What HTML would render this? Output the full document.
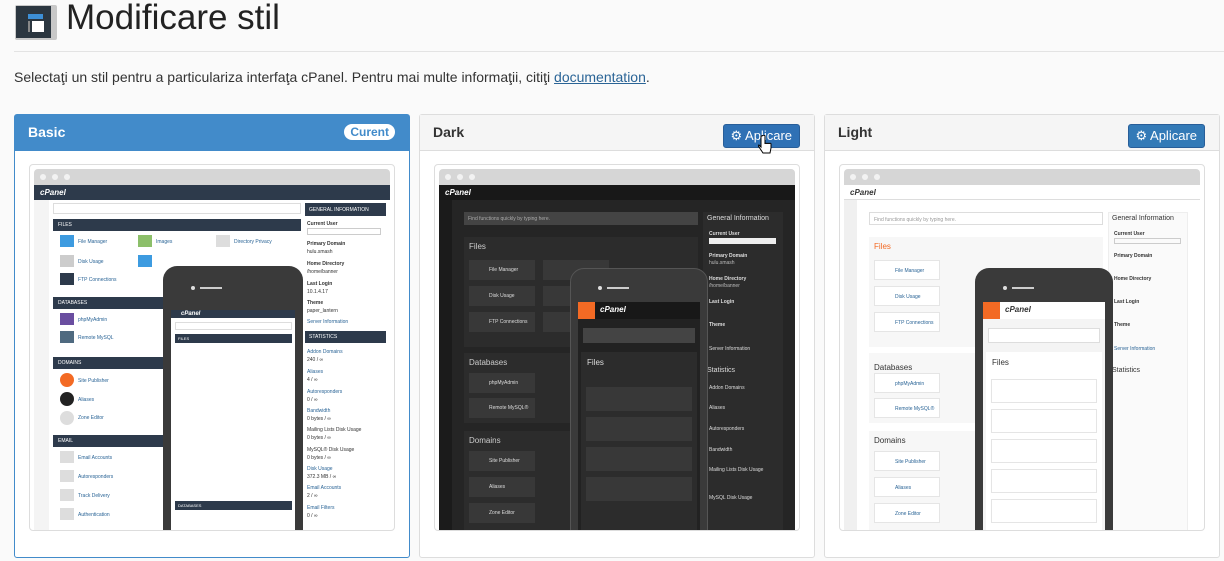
<!DOCTYPE html>
<html><head><meta charset="utf-8"><style>
*{box-sizing:border-box;margin:0;padding:0}
body{width:1224px;height:561px;overflow:hidden;background:#fafafa;font-family:"Liberation Sans",sans-serif;color:#333;position:relative}
.a{position:absolute}
h1{position:absolute;left:66px;top:-2px;font-size:35px;font-weight:400;color:#222}
.hr{position:absolute;left:14px;right:0;top:51px;height:1px;background:#e3e3e3}
p.lead{position:absolute;left:14px;top:69px;font-size:14px;color:#333}
p.lead a{color:#2a6496;text-decoration:underline}
.card{position:absolute;top:114px;width:396px;height:444px;border:1px solid #ddd;border-radius:3px;background:#fff}
.card .hd{height:36px;background:#f5f5f5;border-bottom:1px solid #ddd;padding:9px 13px;font-size:14px;font-weight:bold;color:#333}
.card.sel{border-color:#428bca}
.card.sel .hd{background:#428bca;color:#fff;border-color:#428bca}
.badge{position:absolute;right:14px;top:9px;background:#fff;color:#428bca;border-radius:9px;font-size:12px;font-weight:bold;padding:1px 6px}
.btn{position:absolute;right:14px;top:9px;background:#2f71b5;color:#fff;border-radius:3px;font-size:13px;padding:3px 7px 3px 6px;border:1px solid #285e99}
.frame{position:absolute;left:14px;top:49px;width:366px;height:367px;border:1px solid #ddd;border-radius:4px;background:#fff;overflow:hidden}
.tb{position:absolute;left:4px;right:4px;top:4px;height:16px;background:#d6d6d6;border-radius:4px 4px 0 0}
.tb i{position:absolute;top:5px;width:6px;height:6px;border-radius:3px;background:#f2f2f2}
.r{position:absolute}
.t{position:absolute;font-size:5px;white-space:nowrap}
</style></head><body>
<div class="a" style="left:15px;top:5px;width:42px;height:35px;background:#c8c8c8;border-radius:2px"></div>
<div class="a" style="left:16px;top:6px;width:35px;height:32px;background:#2b3640"></div>
<div class="a" style="left:28px;top:14px;width:15px;height:5px;background:#3d8fd6"></div>
<div class="a" style="left:32px;top:21px;width:12px;height:11px;background:#fff"></div>
<div class="a" style="left:28px;top:21px;width:2px;height:11px;border:1px solid #888"></div>
<h1>Modificare stil</h1>
<div class="hr"></div>
<p class="lead">Selectaţi un stil pentru a particulariza interfaţa cPanel. Pentru mai multe informaţii, citiţi <a>documentation</a>.</p>

<!-- Card 1 -->
<div class="card sel" style="left:14px"><div class="hd">Basic</div><span class="badge">Curent</span>
<div class="frame">
 <div class="tb"><i style="left:6px"></i><i style="left:18px"></i><i style="left:30px"></i></div>
 <div class="r" style="left:4px;right:4px;top:20px;height:15px;background:#2d3a4b"><span class="t" style="left:6px;top:3px;color:#fff;font-size:8px;font-style:italic;font-weight:bold">cPanel</span></div>
 <div class="r" style="left:4px;top:35px;width:15px;height:330px;background:#f4f4f4"></div>
 <div class="r" style="left:23px;top:38px;width:248px;height:11px;border:1px solid #ddd"></div>
 <div class="r" style="left:23px;top:54px;width:248px;height:12px;background:#2d3a4b"><span class="t" style="left:5px;top:3px;color:#fff">FILES</span></div>
 <div class="r" style="left:23px;top:132px;width:248px;height:12px;background:#2d3a4b"><span class="t" style="left:5px;top:3px;color:#fff">DATABASES</span></div>
 <div class="r" style="left:23px;top:192px;width:248px;height:12px;background:#2d3a4b"><span class="t" style="left:5px;top:3px;color:#fff">DOMAINS</span></div>
 <div class="r" style="left:23px;top:270px;width:248px;height:12px;background:#2d3a4b"><span class="t" style="left:5px;top:3px;color:#fff">EMAIL</span></div>
 <div class="r" style="left:30px;top:70px;width:14px;height:12px;background:#3d9be0"></div><span class="t" style="left:48px;top:74px;color:#2a6496">File Manager</span>
 <div class="r" style="left:30px;top:90px;width:14px;height:12px;background:#ccc"></div><span class="t" style="left:48px;top:94px;color:#2a6496">Disk Usage</span>
 <div class="r" style="left:30px;top:108px;width:14px;height:12px;background:#2d3a4b"></div><span class="t" style="left:48px;top:112px;color:#2a6496">FTP Connections</span>
 <div class="r" style="left:30px;top:148px;width:14px;height:12px;background:#6a4ea0"></div><span class="t" style="left:48px;top:152px;color:#2a6496">phpMyAdmin</span>
 <div class="r" style="left:30px;top:166px;width:14px;height:12px;background:#4f6a80"></div><span class="t" style="left:48px;top:170px;color:#2a6496">Remote MySQL</span>
 <div class="r" style="left:30px;top:208px;width:14px;height:14px;border-radius:7px;background:#f36a24"></div><span class="t" style="left:48px;top:213px;color:#2a6496">Site Publisher</span>
 <div class="r" style="left:30px;top:227px;width:14px;height:14px;border-radius:7px;background:#222"></div><span class="t" style="left:48px;top:232px;color:#2a6496">Aliases</span>
 <div class="r" style="left:30px;top:246px;width:14px;height:14px;border-radius:7px;background:#ddd"></div><span class="t" style="left:48px;top:250px;color:#2a6496">Zone Editor</span>
 <div class="r" style="left:30px;top:286px;width:14px;height:12px;background:#ddd"></div><span class="t" style="left:48px;top:290px;color:#2a6496">Email Accounts</span>
 <div class="r" style="left:30px;top:305px;width:14px;height:12px;background:#ddd"></div><span class="t" style="left:48px;top:309px;color:#2a6496">Autoresponders</span>
 <div class="r" style="left:30px;top:324px;width:14px;height:12px;background:#ddd"></div><span class="t" style="left:48px;top:328px;color:#2a6496">Track Delivery</span>
 <div class="r" style="left:30px;top:343px;width:14px;height:12px;background:#ddd"></div><span class="t" style="left:48px;top:347px;color:#2a6496">Authentication</span>
 <div class="r" style="left:108px;top:70px;width:14px;height:12px;background:#8cbf6a"></div><span class="t" style="left:126px;top:74px;color:#2a6496">Images</span>
 <div class="r" style="left:108px;top:90px;width:14px;height:12px;background:#3d9be0"></div>
 <div class="r" style="left:186px;top:70px;width:14px;height:12px;background:#ddd"></div><span class="t" style="left:204px;top:74px;color:#2a6496">Directory Privacy</span>
 <div class="r" style="left:275px;top:38px;width:81px;height:13px;background:#2d3a4b"><span class="t" style="left:4px;top:4px;color:#fff">GENERAL INFORMATION</span></div>
 <span class="t" style="left:277px;top:56px;font-weight:bold">Current User</span>
 <div class="r" style="left:277px;top:63px;width:74px;height:7px;border:1px solid #ccc"></div>
 <span class="t" style="left:277px;top:76px;font-weight:bold">Primary Domain</span><span class="t" style="left:277px;top:84px">hulu.smash</span>
 <span class="t" style="left:277px;top:96px;font-weight:bold">Home Directory</span><span class="t" style="left:277px;top:104px">/home/banner</span>
 <span class="t" style="left:277px;top:116px;font-weight:bold">Last Login</span><span class="t" style="left:277px;top:124px">10.1.4.17</span>
 <span class="t" style="left:277px;top:135px;font-weight:bold">Theme</span><span class="t" style="left:277px;top:143px">paper_lantern</span>
 <span class="t" style="left:277px;top:154px;color:#2a6496">Server Information</span>
 <div class="r" style="left:275px;top:166px;width:81px;height:12px;background:#2d3a4b"><span class="t" style="left:4px;top:3px;color:#fff">STATISTICS</span></div>
 <span class="t" style="left:277px;top:184px;color:#2a6496">Addon Domains</span><span class="t" style="left:277px;top:192px">240 / ∞</span>
 <span class="t" style="left:277px;top:204px;color:#2a6496">Aliases</span><span class="t" style="left:277px;top:212px">4 / ∞</span>
 <span class="t" style="left:277px;top:224px;color:#2a6496">Autoresponders</span><span class="t" style="left:277px;top:232px">0 / ∞</span>
 <span class="t" style="left:277px;top:243px;color:#2a6496">Bandwidth</span><span class="t" style="left:277px;top:251px">0 bytes / ∞</span>
 <span class="t" style="left:277px;top:262px">Mailing Lists Disk Usage</span><span class="t" style="left:277px;top:270px">0 bytes / ∞</span>
 <span class="t" style="left:277px;top:282px">MySQL® Disk Usage</span><span class="t" style="left:277px;top:290px">0 bytes / ∞</span>
 <span class="t" style="left:277px;top:301px;color:#2a6496">Disk Usage</span><span class="t" style="left:277px;top:309px">372.3 MB / ∞</span>
 <span class="t" style="left:277px;top:320px;color:#2a6496">Email Accounts</span><span class="t" style="left:277px;top:328px">2 / ∞</span>
 <span class="t" style="left:277px;top:340px;color:#2a6496">Email Filters</span><span class="t" style="left:277px;top:348px">0 / ∞</span>
 <div class="r" style="left:133px;top:101px;width:140px;height:280px;background:#3a3a3a;border-radius:14px"></div>
 <div class="r" style="left:161px;top:121px;width:4px;height:4px;border-radius:2px;background:#ddd"></div>
 <div class="r" style="left:170px;top:122px;width:22px;height:2px;background:#ccc"></div>
 <div class="r" style="left:141px;top:145px;width:124px;height:230px;background:#fff"></div>
 <div class="r" style="left:141px;top:145px;width:124px;height:8px;background:#2d3a4b"><span class="t" style="left:10px;top:1px;color:#fff;font-size:6px;font-style:italic;font-weight:bold">cPanel</span></div>
 <div class="r" style="left:145px;top:157px;width:117px;height:8px;border:1px solid #ddd"></div>
 <div class="r" style="left:145px;top:169px;width:117px;height:9px;background:#2d3a4b"><span class="t" style="left:3px;top:2px;color:#fff;font-size:4px">FILES</span></div>
 <div class="r" style="left:145px;top:336px;width:117px;height:9px;background:#2d3a4b"><span class="t" style="left:3px;top:2px;color:#fff;font-size:4px">DATABASES</span></div>
</div></div>

<!-- Card 2 -->
<div class="card" style="left:419px"><div class="hd">Dark</div>
<span class="btn">⚙ Aplicare</span>
<div class="frame" style="border-color:#ddd">
 <div class="tb" style="left:4px;right:4px"><i style="left:6px"></i><i style="left:18px"></i><i style="left:30px"></i></div>
 <div class="r" style="left:4px;right:4px;top:20px;height:347px;background:#252525"></div>
 <div class="r" style="left:4px;right:4px;top:20px;height:15px;background:#181818"><span class="t" style="left:6px;top:3px;color:#fff;font-size:8px;font-style:italic;font-weight:bold">cPanel</span></div>
 <div class="r" style="left:4px;top:35px;width:13px;height:330px;background:#1b1b1b"></div>
 <div class="r" style="left:29px;top:47px;width:234px;height:13px;background:#444"><span class="t" style="left:4px;top:4px;color:#aaa">Find functions quickly by typing here.</span></div>
 <div class="r" style="left:29px;top:72px;width:234px;height:110px;background:#2c2c2c"><span class="t" style="left:5px;top:5px;color:#ccc;font-size:8px">Files</span></div>
 <div class="r" style="left:29px;top:188px;width:234px;height:70px;background:#2c2c2c"><span class="t" style="left:5px;top:5px;color:#ccc;font-size:8px">Databases</span></div>
 <div class="r" style="left:29px;top:266px;width:234px;height:100px;background:#2c2c2c"><span class="t" style="left:5px;top:5px;color:#ccc;font-size:8px">Domains</span></div>
 <div class="r" style="left:34px;top:95px;width:66px;height:20px;background:#383838"><span class="t" style="left:20px;top:7px;color:#ddd">File Manager</span></div>
 <div class="r" style="left:34px;top:121px;width:66px;height:20px;background:#383838"><span class="t" style="left:20px;top:7px;color:#ddd">Disk Usage</span></div>
 <div class="r" style="left:34px;top:147px;width:66px;height:20px;background:#383838"><span class="t" style="left:20px;top:7px;color:#ddd">FTP Connections</span></div>
 <div class="r" style="left:34px;top:208px;width:66px;height:20px;background:#383838"><span class="t" style="left:20px;top:7px;color:#ddd">phpMyAdmin</span></div>
 <div class="r" style="left:34px;top:233px;width:66px;height:20px;background:#383838"><span class="t" style="left:20px;top:7px;color:#ddd">Remote MySQL®</span></div>
 <div class="r" style="left:34px;top:286px;width:66px;height:20px;background:#383838"><span class="t" style="left:20px;top:7px;color:#ddd">Site Publisher</span></div>
 <div class="r" style="left:34px;top:312px;width:66px;height:20px;background:#383838"><span class="t" style="left:20px;top:7px;color:#ddd">Aliases</span></div>
 <div class="r" style="left:34px;top:338px;width:66px;height:20px;background:#383838"><span class="t" style="left:20px;top:7px;color:#ddd">Zone Editor</span></div>
 <div class="r" style="left:108px;top:95px;width:66px;height:20px;background:#383838"></div>
 <div class="r" style="left:108px;top:121px;width:66px;height:20px;background:#383838"></div>
 <div class="r" style="left:108px;top:147px;width:66px;height:20px;background:#383838"></div>
 <div class="r" style="left:268px;top:47px;width:80px;height:320px;background:#2c2c2c"></div>
 <span class="t" style="left:272px;top:50px;color:#ddd;font-size:7px">General Information</span>
 <span class="t" style="left:274px;top:66px;color:#ddd;font-weight:bold">Current User</span><div class="r" style="left:274px;top:73px;width:67px;height:6px;background:#eee"></div>
 <span class="t" style="left:274px;top:88px;color:#ddd;font-weight:bold">Primary Domain</span><span class="t" style="left:274px;top:95px;color:#bbb">hulu.smash</span>
 <span class="t" style="left:274px;top:111px;color:#ddd;font-weight:bold">Home Directory</span><span class="t" style="left:274px;top:118px;color:#bbb">/home/banner</span>
 <span class="t" style="left:274px;top:134px;color:#ddd;font-weight:bold">Last Login</span>
 <span class="t" style="left:274px;top:157px;color:#ddd;font-weight:bold">Theme</span>
 <span class="t" style="left:274px;top:181px;color:#ddd">Server Information</span>
 <span class="t" style="left:272px;top:202px;color:#ddd;font-size:7px">Statistics</span>
 <span class="t" style="left:274px;top:220px;color:#ddd">Addon Domains</span><span class="t" style="left:274px;top:240px;color:#ddd">Aliases</span><span class="t" style="left:274px;top:261px;color:#ddd">Autoresponders</span><span class="t" style="left:274px;top:282px;color:#ddd">Bandwidth</span><span class="t" style="left:274px;top:302px;color:#ddd">Mailing Lists Disk Usage</span><span class="t" style="left:274px;top:330px;color:#ddd">MySQL Disk Usage</span>
 <div class="r" style="left:135px;top:103px;width:138px;height:275px;background:#3a3a3a;border-radius:14px;border:1px solid #555"></div>
 <div class="r" style="left:163px;top:121px;width:4px;height:4px;border-radius:2px;background:#ddd"></div>
 <div class="r" style="left:172px;top:122px;width:22px;height:2px;background:#ccc"></div>
 <div class="r" style="left:143px;top:137px;width:122px;height:235px;background:#222"></div>
 <div class="r" style="left:143px;top:137px;width:122px;height:17px;background:#181818"></div>
 <div class="r" style="left:143px;top:137px;width:17px;height:17px;background:#f36a24"></div>
 <span class="t" style="left:165px;top:140px;color:#fff;font-size:8px;font-style:italic;font-weight:bold">cPanel</span>
 <div class="r" style="left:148px;top:163px;width:112px;height:15px;background:#444"></div>
 <div class="r" style="left:146px;top:187px;width:116px;height:185px;background:#2c2c2c"><span class="t" style="left:6px;top:6px;color:#ddd;font-size:8px">Files</span></div>
 <div class="r" style="left:151px;top:222px;width:106px;height:24px;background:#383838"></div>
 <div class="r" style="left:151px;top:252px;width:106px;height:24px;background:#383838"></div>
 <div class="r" style="left:151px;top:282px;width:106px;height:24px;background:#383838"></div>
 <div class="r" style="left:151px;top:312px;width:106px;height:24px;background:#383838"></div>
</div>
<svg class="a" style="left:338px;top:20px" width="14" height="22" viewBox="0 0 14 22"><path d="M3 1v11l-2-2c-1 0-1 1 0 2l4 6h7l1-5v-4c0-1-2-1-2 0c0-1-2-1-2 0c0-1-2-1-2 0V1c0-1-3-1-3 0z" fill="#fff" stroke="#000" stroke-width="1"/></svg>
</div>

<!-- Card 3 -->
<div class="card" style="left:824px;width:396px"><div class="hd">Light</div>
<span class="btn" style="background:#337ab7">⚙ Aplicare</span>
<div class="frame">
 <div class="tb"><i style="left:6px"></i><i style="left:18px"></i><i style="left:30px"></i></div>
 <div class="r" style="left:4px;right:4px;top:20px;height:15px;background:#fff;border-bottom:1px solid #ddd"><span class="t" style="left:6px;top:3px;color:#333;font-size:8px;font-style:italic;font-weight:bold">cPanel</span></div>
 <div class="r" style="left:4px;top:35px;width:13px;height:330px;background:#f0f0f0"></div>
 <div class="r" style="left:29px;top:47px;width:234px;height:13px;border:1px solid #ddd"><span class="t" style="left:4px;top:4px;color:#999">Find functions quickly by typing here.</span></div>
 <div class="r" style="left:29px;top:72px;width:234px;height:110px;background:#f7f7f7"><span class="t" style="left:5px;top:5px;color:#f36a24;font-size:8px">Files</span></div>
 <div class="r" style="left:29px;top:188px;width:234px;height:70px;background:#f7f7f7"><span class="t" style="left:5px;top:10px;color:#333;font-size:8px">Databases</span></div>
 <div class="r" style="left:29px;top:266px;width:234px;height:100px;background:#f7f7f7"><span class="t" style="left:5px;top:5px;color:#333;font-size:8px">Domains</span></div>
 <div class="r" style="left:34px;top:95px;width:66px;height:20px;background:#fff;border:1px solid #e5e5e5"><span class="t" style="left:20px;top:7px;color:#2a6496">File Manager</span></div>
 <div class="r" style="left:34px;top:121px;width:66px;height:20px;background:#fff;border:1px solid #e5e5e5"><span class="t" style="left:20px;top:7px;color:#2a6496">Disk Usage</span></div>
 <div class="r" style="left:34px;top:147px;width:66px;height:20px;background:#fff;border:1px solid #e5e5e5"><span class="t" style="left:20px;top:7px;color:#2a6496">FTP Connections</span></div>
 <div class="r" style="left:34px;top:208px;width:66px;height:20px;background:#fff;border:1px solid #e5e5e5"><span class="t" style="left:20px;top:7px;color:#2a6496">phpMyAdmin</span></div>
 <div class="r" style="left:34px;top:233px;width:66px;height:20px;background:#fff;border:1px solid #e5e5e5"><span class="t" style="left:20px;top:7px;color:#2a6496">Remote MySQL®</span></div>
 <div class="r" style="left:34px;top:286px;width:66px;height:20px;background:#fff;border:1px solid #e5e5e5"><span class="t" style="left:20px;top:7px;color:#2a6496">Site Publisher</span></div>
 <div class="r" style="left:34px;top:312px;width:66px;height:20px;background:#fff;border:1px solid #e5e5e5"><span class="t" style="left:20px;top:7px;color:#2a6496">Aliases</span></div>
 <div class="r" style="left:34px;top:338px;width:66px;height:20px;background:#fff;border:1px solid #e5e5e5"><span class="t" style="left:20px;top:7px;color:#2a6496">Zone Editor</span></div>
 <div class="r" style="left:268px;top:47px;width:80px;height:320px;background:#fafafa;border:1px solid #eee"></div>
 <span class="t" style="left:272px;top:50px;color:#333;font-size:7px">General Information</span>
 <span class="t" style="left:274px;top:66px;font-weight:bold">Current User</span><div class="r" style="left:274px;top:73px;width:67px;height:6px;border:1px solid #ccc"></div>
 <span class="t" style="left:274px;top:88px;font-weight:bold">Primary Domain</span>
 <span class="t" style="left:274px;top:111px;font-weight:bold">Home Directory</span>
 <span class="t" style="left:274px;top:134px;font-weight:bold">Last Login</span>
 <span class="t" style="left:274px;top:157px;font-weight:bold">Theme</span>
 <span class="t" style="left:274px;top:181px;color:#2a6496">Server Information</span>
 <span class="t" style="left:272px;top:202px;font-size:7px">Statistics</span>
 <div class="r" style="left:135px;top:103px;width:138px;height:275px;background:#3a3a3a;border-radius:14px"></div>
 <div class="r" style="left:163px;top:121px;width:4px;height:4px;border-radius:2px;background:#ddd"></div>
 <div class="r" style="left:172px;top:122px;width:22px;height:2px;background:#ccc"></div>
 <div class="r" style="left:143px;top:137px;width:122px;height:235px;background:#f4f4f4"></div>
 <div class="r" style="left:143px;top:137px;width:122px;height:17px;background:#fff"></div>
 <div class="r" style="left:143px;top:137px;width:17px;height:17px;background:#f36a24"></div>
 <span class="t" style="left:165px;top:140px;color:#333;font-size:8px;font-style:italic;font-weight:bold">cPanel</span>
 <div class="r" style="left:148px;top:163px;width:112px;height:15px;background:#fff;border:1px solid #ddd"></div>
 <div class="r" style="left:146px;top:187px;width:116px;height:185px;background:#fff"><span class="t" style="left:6px;top:6px;font-size:8px">Files</span></div>
 <div class="r" style="left:151px;top:214px;width:106px;height:24px;border:1px solid #e5e5e5"></div>
 <div class="r" style="left:151px;top:244px;width:106px;height:24px;border:1px solid #e5e5e5"></div>
 <div class="r" style="left:151px;top:274px;width:106px;height:24px;border:1px solid #e5e5e5"></div>
 <div class="r" style="left:151px;top:304px;width:106px;height:24px;border:1px solid #e5e5e5"></div>
 <div class="r" style="left:151px;top:334px;width:106px;height:24px;border:1px solid #e5e5e5"></div>
</div></div>
</body></html>
